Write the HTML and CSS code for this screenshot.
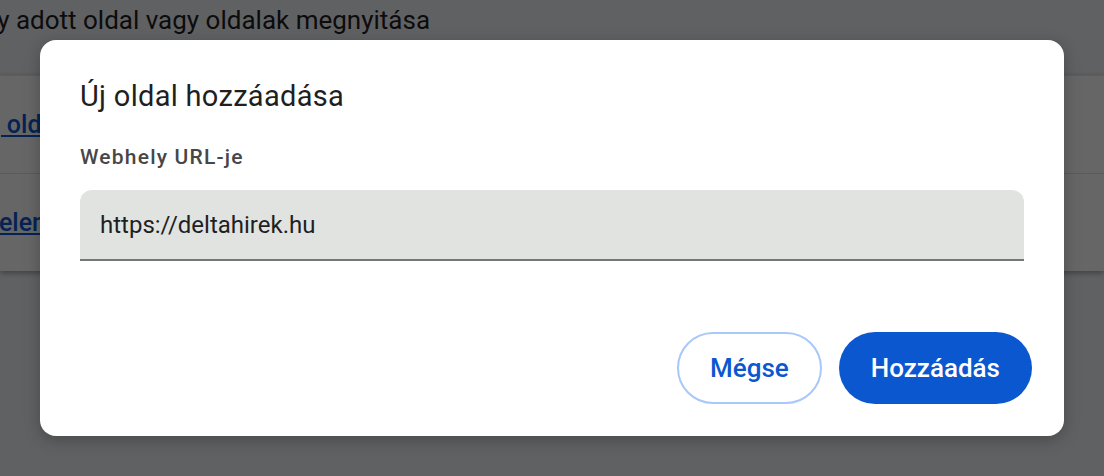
FILE: index.html
```html
<!DOCTYPE html>
<html lang="hu">
<head>
<meta charset="utf-8">
<link rel="stylesheet" href="styles.css">
</head>
<body>
<div class="page">
  <div class="page-title">Egy adott oldal vagy oldalak megnyitása</div>
  <div class="card">
    <div class="row"><a class="link link-1" href="#">Új oldal hozzáadása</a></div>
    <div class="row"><a class="link link-2" href="#">Jelenlegi oldalak használata</a></div>
  </div>
</div>
<div class="scrim"></div>
<div class="dialog" role="dialog">
  <h2 class="dialog-title">Új oldal hozzáadása</h2>
  <label class="field-label">Webhely URL-je</label>
  <div class="field"><span class="field-value">https://deltahirek.hu</span></div>
  <div class="actions">
    <button class="btn btn-outline">Mégse</button>
    <button class="btn btn-filled">Hozzáadás</button>
  </div>
</div>
</body>
</html>
```

FILE: styles.css
```css
html, body {
  margin: 0;
  padding: 0;
  width: 1104px;
  height: 476px;
  overflow: hidden;
}
body {
  font-family: Roboto, "Noto Sans", "Liberation Sans", sans-serif;
  background: #f1f3f6;
  position: relative;
}
.page {
  display: flex;
  flex-direction: column;
}
.page-title {
  font-size: 26px;
  line-height: 40px;
  color: #1f1f1f;
  margin-left: -32px;
  height: 75px;
  white-space: nowrap;
}
.card {
  background: #ffffff;
  border-top: 1px solid #e6e6e6;
  box-shadow: 0 2px 6px rgba(0,0,0,0.35);
  display: flex;
  flex-direction: column;
}
.row {
  height: 97px;
  display: flex;
  align-items: center;
  white-space: nowrap;
  overflow: hidden;
}
.row + .row { border-top: 1px solid #e0e0e0; }
.link {
  font-size: 25px;
  font-weight: 500;
  color: #0b57d0;
  text-decoration: underline;
}
.link-1 { margin-left: -22px; }
.link-2 { margin-left: -15px; }
.scrim {
  position: absolute;
  inset: 0;
  background: rgba(0,0,0,0.6);
}
.dialog {
  position: absolute;
  left: 40px;
  top: 40px;
  width: 1024px;
  height: 396px;
  box-sizing: border-box;
  background: #ffffff;
  border-radius: 16px;
  padding: 38px 32px 32px 40px;
  display: flex;
  flex-direction: column;
  box-shadow: 0 4px 16px rgba(0,0,0,0.25);
}
.dialog-title {
  margin: 0;
  font-size: 29px;
  font-weight: 400;
  letter-spacing: 0.3px;
  line-height: 36px;
  color: #1f1f1f;
}
.field-label {
  margin-top: 31px;
  font-size: 21px;
  font-weight: 500;
  letter-spacing: 1.2px;
  line-height: 24px;
  color: #474747;
}
.field {
  margin-top: 21px;
  margin-right: 8px;
  height: 69px;
  background: #e1e3e1;
  border-radius: 12px 12px 0 0;
  border-bottom: 2px solid #747775;
  display: flex;
  align-items: center;
  padding-left: 20px;
}
.field-value {
  font-size: 24px;
  color: #1f1f1f;
}
.actions {
  margin-top: auto;
  display: flex;
  justify-content: flex-end;
  gap: 17px;
}
.btn {
  height: 72px;
  border-radius: 36px;
  font-family: Roboto, "Noto Sans", "Liberation Sans", sans-serif;
  font-size: 26px;
  font-weight: 500;
  padding: 0 31px;
  cursor: pointer;
}
.btn-outline {
  background: #ffffff;
  border: 2px solid #a8c7fa;
  color: #0b57d0;
}
.btn-filled {
  background: #0b57d0;
  border: none;
  color: #ffffff;
  padding: 0 32px;
}
```
